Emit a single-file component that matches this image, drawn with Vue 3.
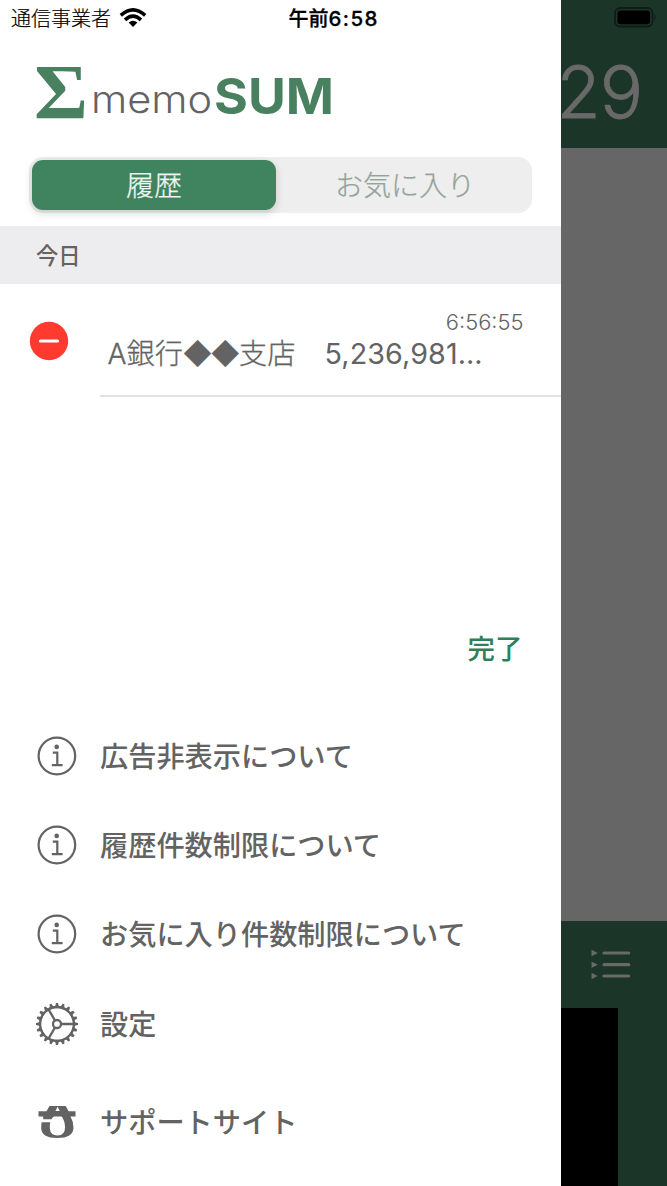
<template>
    <div class="screen">
        <aside class="drawer">
            <header class="status-bar">
                <span class="carrier">通信事業者</span>
                <svg class="wifi" width="28" height="20" viewBox="0 0 28 20">
                    <g fill="none" stroke="#000" stroke-width="3.5">
                        <path d="M1.8 7.4 Q14 -3.6 26.2 7.4" />
                        <path d="M6 11.9 Q14 4.4 22 11.9" />
                    </g>
                    <path d="M9.6 14.6 Q14 10.8 18.4 14.6 L14 19 Z" fill="#000" />
                </svg>
                <span class="clock">午前<b>6:58</b></span>
            </header>

            <!-- ロゴ -->
            <svg class="logo" width="304" height="80" viewBox="-2 -12 304 80">
                <text
                    class="logo-sigma"
                    x="-2"
                    y="55.5"
                    textLength="54"
                    lengthAdjust="spacingAndGlyphs"
                >Σ</text>
                <text
                    class="logo-memo"
                    x="55"
                    y="51"
                    textLength="121"
                    lengthAdjust="spacingAndGlyphs"
                >memo</text>
                <text
                    class="logo-sum"
                    x="178"
                    y="51.5"
                    textLength="120"
                    lengthAdjust="spacingAndGlyphs"
                >SUM</text>
            </svg>

            <div class="segmented">
                <button
                    v-for="tab in tabs"
                    :key="tab"
                    class="segment"
                    :class="{ active: tab === activeTab }"
                    @click="activeTab = tab"
                >
                    {{ tab }}
                </button>
            </div>

            <h2 class="section-title">今日</h2>

            <div class="history-row">
                <svg class="delete-icon" width="40" height="40" viewBox="0 0 40 40">
                    <circle cx="20" cy="20" r="19.2" fill="#ff3b30" />
                    <path
                        d="M11.5 20 H28.5"
                        stroke="#fff"
                        stroke-width="3.2"
                        stroke-linecap="round"
                    />
                </svg>
                <div class="history-body">
                    <span class="time">6:56:55</span>
                    <div class="history-line">
                        <span class="label">A銀行<i>◆◆</i>支店</span>
                        <span class="amount">5,236,981...</span>
                    </div>
                </div>
            </div>

            <div class="done-row">
                <button class="done">完了</button>
            </div>

            <nav class="menu">
                <a
                    v-for="item in menuItems"
                    :key="item.text"
                    class="menu-item"
                    :class="item.icon"
                >
                    <svg width="44" height="44" viewBox="0 0 44 44">
                        <g
                            v-if="item.icon === 'info'"
                            fill="none"
                            stroke="#636363"
                            stroke-width="2.2"
                        >
                            <circle cx="21.9" cy="22" r="18.3" />
                            <circle cx="21.7" cy="12.9" r="2.3" fill="#636363" stroke="none" />
                            <path d="M17.8 18.6 H22.3 V31 M16.8 31.2 H27.6" />
                        </g>
                        <g
                            v-else-if="item.icon === 'gear'"
                            fill="none"
                            stroke="#636363"
                            stroke-width="2.3"
                        >
                            <circle cx="22" cy="22" r="17" />
                            <circle cx="22" cy="22" r="4" />
                            <path d="M26 22 H39 M20 18.5 L13.5 7.3 M20 25.5 L13.5 36.7" />
                            <path
                                v-for="n in 20"
                                :key="n"
                                d="M37.8 19.7 L43 21 V23 L37.8 24.3 Z"
                                fill="#636363"
                                stroke="none"
                                :transform="`rotate(${n * 18} 22 22)`"
                            />
                        </g>
                        <!-- 帽子をかぶった丸い顔のマーク -->
                        <g v-else fill="#636363">
                            <path d="M14.5 6 H30.7 L34 12 H11 Z" />
                            <path d="M3.5 11.3 H40.5 V16.6 H3.5 Z" />
                            <path d="M22.6 6.8 L24.8 11 H20.4 Z" fill="#fff" />
                            <path d="M8.2 16 H19 L16.4 19.3 H8.2 Z" />
                            <path
                                d="M6.5 22.2 H15.2 Q14.6 25 14.8 28.5 Q15.4 35.4 22.6 35.4 Q30 35.4 30 27.5 Q30 20.5 26.4 16 H35.3 Q38.5 21.5 38.5 28 Q38.2 38 22.3 38 Q6.2 38 6.2 28 Z"
                            />
                        </g>
                    </svg>
                    <span>{{ item.text }}</span>
                </a>
            </nav>
        </aside>

        <!-- ドロワーの背後で暗くなっている電卓画面 -->
        <main class="backdrop">
            <div class="display">
                <svg class="battery" width="44" height="22" viewBox="0 0 44 22">
                    <rect
                        x="1"
                        y="1"
                        width="37.5"
                        height="18.5"
                        rx="5"
                        fill="none"
                        stroke="#0e1d16"
                        stroke-width="1.8"
                    />
                    <rect x="3.4" y="3.5" width="32.6" height="13.7" rx="3" fill="#000" />
                    <path d="M40.5 7 Q42.8 10.2 40.5 13.5 Z" fill="#0e1d16" />
                </svg>
                <span class="result">29</span>
            </div>
            <div class="paper"></div>
            <div class="toolbar">
                <svg width="40" height="32" viewBox="0 0 40 32">
                    <g v-for="y in [4, 15.7, 27]" :key="y">
                        <path :d="`M0.5 ${y - 3.3} L6.8 ${y} L0.5 ${y + 3.3} Z`" fill="#696969" />
                        <path
                            :d="`M13 ${y} H37.7`"
                            stroke="#696969"
                            stroke-width="3.2"
                            stroke-linecap="round"
                        />
                    </g>
                </svg>
            </div>
            <div class="keypad"></div>
        </main>
    </div>
</template>

<script setup>
import { ref } from "vue";

const tabs = ["履歴", "お気に入り"];
const activeTab = ref("履歴");

const menuItems = [
    { icon: "info", text: "広告非表示について" },
    { icon: "info", text: "履歴件数制限について" },
    { icon: "info", text: "お気に入り件数制限について" },
    { icon: "gear", text: "設定" },
    { icon: "support", text: "サポートサイト" },
];
</script>

<style>
body {
    margin: 0;
}
</style>

<style scoped>
.screen {
    display: flex;
    width: 667px;
    height: 1186px;
    overflow: hidden;
    background: #fff;
    font-family: Inter, "Noto Sans CJK JP", sans-serif;
    color: #636363;
}

.drawer {
    flex: none;
    display: flex;
    flex-direction: column;
    width: 560.5px;
    height: 1186px;
}

button {
    border: 0;
    padding: 0;
    background: none;
    font: inherit;
}

/* ステータスバー */
.status-bar {
    display: flex;
    align-items: center;
    height: 37px;
    padding-left: 11px;
    color: #000;
    font-size: 20px;
    line-height: 36px;
    white-space: nowrap;
}

.carrier {
    width: 108px;
    padding-top: 1px;
    font-weight: 300;
    -webkit-text-stroke: 0.2px #000;
}

.wifi {
    margin-bottom: 1px;
}

.clock {
    margin-left: 141.5px;
    padding-top: 1px;
    font-weight: 500;
    -webkit-text-stroke: 0.3px #000;
}

.clock b {
    font-size: 20.5px;
    font-weight: 500;
    letter-spacing: 1.4px;
}

.logo {
    flex: none;
    margin: 13px 0 0 34px;
}

.logo-sigma {
    font: bold 79px "Liberation Serif", serif;
    fill: #49805f;
}

.logo-memo {
    font: 300 38px Inter, sans-serif;
    fill: #636363;
}

.logo-sum {
    font: 700 50px Inter, sans-serif;
    fill: #49805f;
}

/* 履歴・お気に入り切り替え */
.segmented {
    flex: none;
    display: flex;
    box-sizing: border-box;
    width: 503px;
    height: 56.5px;
    margin: 26.5px 0 0 29px;
    padding: 3.5px 3px;
    border-radius: 14px;
    background: #eeeeee;
}

.segment {
    width: 244px;
    height: 50px;
    border-radius: 11px;
    font-size: 28px;
    font-weight: 300;
    line-height: 52px;
    color: #93a499;
    -webkit-text-stroke: 0.25px currentColor;
}

.segment + .segment {
    margin-left: 7px;
}

.segment.active {
    background: #3f835f;
    color: #f2f7f4;
    box-shadow: 0 3px 8px rgba(0, 0, 0, 0.16);
}

.section-title {
    flex: none;
    height: 58px;
    margin: 13px 0 0;
    padding-left: 36px;
    background: #ededef;
    font-size: 22.3px;
    font-weight: 500;
    line-height: 60px;
}

.history-row {
    flex: none;
    display: flex;
    height: 113px;
}

.delete-icon {
    flex: none;
    margin: 37px 30.5px 0 29px;
}

.history-body {
    flex: 1;
    display: flex;
    flex-direction: column;
    box-sizing: border-box;
    padding: 26px 37px 0 8px;
    border-bottom: 2px solid #e2e2e2;
}

.time {
    align-self: flex-end;
    font-size: 21.9px;
    font-weight: 300;
    line-height: 24px;
}

.history-line {
    display: flex;
    height: 36px;
    font-size: 28.2px;
    line-height: 38px;
    white-space: nowrap;
}

.label {
    width: 217px;
    padding-top: 1px;
    font-weight: 300;
    -webkit-text-stroke: 0.3px currentColor;
}

.label i {
    margin-right: 1px;
    font-style: normal;
    letter-spacing: -1.9px;
}

.amount {
    padding-top: 1px;
    font-size: 28.7px;
    letter-spacing: 0.1px;
    font-weight: 400;
}

.done-row {
    flex: none;
    display: flex;
    justify-content: flex-end;
    margin-top: 232px;
    padding-right: 38px;
}

.done {
    font-size: 27.5px;
    font-weight: 500;
    line-height: 40px;
    color: #2f7f58;
}

/* メニュー */
.menu {
    display: flex;
    flex-direction: column;
    padding: 42.5px 0 0 34.5px;
}

.menu-item {
    display: flex;
    align-items: center;
    height: 89px;
    font-size: 28.2px;
    font-weight: 500;
    line-height: 40px;
    white-space: nowrap;
}

.menu-item span {
    margin-left: 21.5px;
    padding-top: 2px;
}

.menu-item.gear {
    height: 91px;
}

.menu-item.support {
    height: 104px;
}

/* 背後の画面 */
.backdrop {
    flex: 1;
    display: flex;
    flex-direction: column;
    min-width: 0;
    background: #1b3529;
}

.display {
    display: flex;
    flex-direction: column;
    align-items: flex-end;
    height: 147.5px;
}

.battery {
    margin: 7px 9px 0 0;
}

.result {
    margin: 20px 25px 0 0;
    font-size: 72px;
    font-weight: 300;
    line-height: 86px;
    letter-spacing: -1px;
    color: #696969;
    -webkit-text-stroke: 0.8px #696969;
}

.paper {
    height: 773.5px;
    background: #666;
}

.toolbar {
    display: flex;
    align-items: center;
    height: 87px;
    padding-left: 30px;
}

.keypad {
    width: 57.5px;
    height: 178px;
    background: #000;
}
</style>
